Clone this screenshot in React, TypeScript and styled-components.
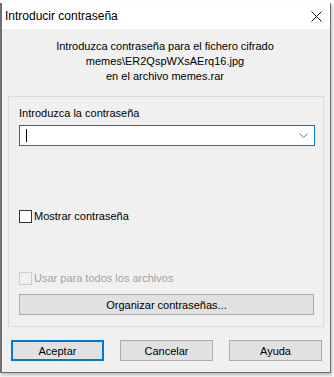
import React from "react";
import styled, { createGlobalStyle } from "styled-components";

const Global = createGlobalStyle`
  html, body { margin: 0; padding: 0; background: #f7f7f7; }
  body { font-family: "Liberation Sans", Arial, sans-serif; font-size: 11px; color: #000; }
  #root { width: 334px; height: 377px; overflow: hidden; }
`;

const Strip = styled.div`
  height: 3px;
  background: #ffffff;
`;

const Window = styled.div`
  width: 331px;
  height: 370px;
  box-sizing: border-box;
  border: 1px solid #6f6f6f;
  border-top: none;
  border-left-width: 2px;
  background: #f0f0f0;
  display: flex;
  flex-direction: column;
  box-shadow: 1px 2px 3px rgba(0, 0, 0, 0.25);
`;

const TitleBar = styled.div`
  height: 26px;
  background: #ffffff;
  display: flex;
  align-items: center;
  justify-content: space-between;
  padding: 0 8px 0 3px;
  font-size: 12px;
  color: #000;
`;

const Body = styled.div`
  flex: 1;
  display: flex;
  flex-direction: column;
  padding: 10px 6px 0 6px;
`;

const Description = styled.div`
  text-align: center;
  line-height: 15px;
  margin-bottom: 12px;
  padding-right: 2px;
`;

const Group = styled.div`
  border: 1px solid #dcdcdc;
  height: 231px;
  box-sizing: border-box;
  display: flex;
  flex-direction: column;
  padding: 8px 8px 0 10px;
`;

const Label = styled.div`
  line-height: 16px;
  margin-bottom: 4px;
`;

const Combo = styled.div`
  height: 21px;
  box-sizing: border-box;
  border: 1px solid #0078d7;
  background: #fff;
  display: flex;
  align-items: center;
  justify-content: space-between;
  padding: 0 6px 0 6px;
`;

const Caret = styled.span`
  width: 1px;
  height: 13px;
  background: #000;
`;

const CheckRow = styled.label<{ $disabled?: boolean; $mt: number }>`
  display: flex;
  align-items: center;
  gap: 2px;
  margin-top: ${(p) => p.$mt}px;
  color: ${(p) => (p.$disabled ? "#a2a2a2" : "#000")};
  line-height: 14px;
`;

const Box = styled.span<{ $disabled?: boolean }>`
  width: 13px;
  height: 13px;
  box-sizing: border-box;
  border: 1px solid ${(p) => (p.$disabled ? "#cccccc" : "#333333")};
  background: ${(p) => (p.$disabled ? "#f0f0f0" : "#ffffff")};
`;

const WideButton = styled.div`
  margin-top: 9px;
  height: 21px;
  box-sizing: border-box;
  border: 1px solid #adadad;
  background: #e1e1e1;
  display: flex;
  align-items: center;
  justify-content: center;
  margin-right: 1px;
`;

const Buttons = styled.div`
  display: flex;
  gap: 16px;
  margin-top: 13px;
  padding-left: 3px;
`;

const Btn = styled.div<{ $focus?: boolean }>`
  width: 93px;
  height: 21px;
  box-sizing: border-box;
  border: ${(p) => (p.$focus ? "2px solid #0078d7" : "1px solid #adadad")};
  background: #e1e1e1;
  display: flex;
  align-items: center;
  justify-content: center;
`;

export default function App() {
  return (
    <>
      <Global />
      <Strip />
      <Window>
        <TitleBar>
          <span>Introducir contraseña</span>
          <svg width="11" height="11" viewBox="0 0 11 11">
            <path d="M0.5 0.5 L10.5 10.5 M10.5 0.5 L0.5 10.5" stroke="#111" strokeWidth="1" />
          </svg>
        </TitleBar>
        <Body>
          <Description>
            Introduzca contraseña para el fichero cifrado
            <br />
            memes\ER2QspWXsAErq16.jpg
            <br />
            en el archivo memes.rar
          </Description>
          <Group>
            <Label>Introduzca la contraseña</Label>
            <Combo>
              <Caret />
              <svg width="9" height="5" viewBox="0 0 9 5">
                <path d="M0.5 0.5 L4.5 4.5 L8.5 0.5" fill="none" stroke="#777" strokeWidth="1" />
              </svg>
            </Combo>
            <CheckRow $mt={63}>
              <Box />
              Mostrar contraseña
            </CheckRow>
            <CheckRow $mt={48} $disabled>
              <Box $disabled />
              Usar para todos los archivos
            </CheckRow>
            <WideButton>Organizar contraseñas...</WideButton>
          </Group>
          <Buttons>
            <Btn $focus>Aceptar</Btn>
            <Btn>Cancelar</Btn>
            <Btn>Ayuda</Btn>
          </Buttons>
        </Body>
      </Window>
    </>
  );
}
